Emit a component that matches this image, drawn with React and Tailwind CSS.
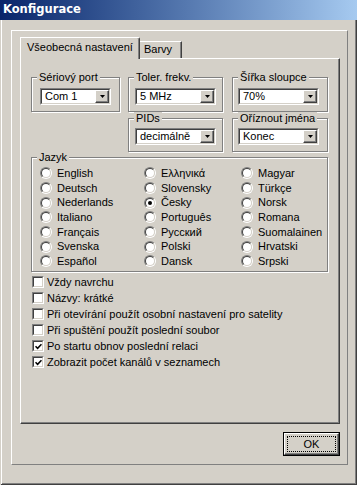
import React from 'react';

const raisedBtn = "bg-[#d4d0c8] border border-t-white border-l-white border-r-[#404040] border-b-[#404040] shadow-[inset_-1px_-1px_0_#808080]";

const DropBtn = () => (
    <div className={`w-[14px] h-full flex items-center justify-center ${raisedBtn}`}>
        <svg width="5" height="3" viewBox="0 0 5 3"><path d="M0 0h5L2.5 3z" fill="#000" /></svg>
    </div>
);

const Combo = ({ value }) => (
    <div className="h-[17px] flex border border-t-[#808080] border-l-[#808080] border-b-white border-r-white">
        <div className="flex-1 flex bg-white border border-t-[#404040] border-l-[#404040] border-b-[#d4d0c8] border-r-[#d4d0c8]">
            <span className="flex-1 pl-[3px] leading-[13px] whitespace-nowrap overflow-hidden">{value}</span>
            <DropBtn />
        </div>
    </div>
);

const Group = ({ label, className, children }) => (
    <div className={`relative border border-[#808080] shadow-[inset_1px_1px_0_#fff,1px_1px_0_#fff] ${className}`}>
        <span className="absolute -top-[7px] left-[5px] px-[2px] bg-[#d4d0c8] leading-[13px] whitespace-nowrap">{label}</span>
        {children}
    </div>
);

const Radio = ({ label, checked }) => (
    <div className="h-[14.7px] flex items-center gap-[5px] whitespace-nowrap">
        <div className="w-[12px] h-[12px] rounded-full border border-t-[#808080] border-l-[#808080] border-b-white border-r-white">
            <div className="w-full h-full rounded-full bg-white border border-t-[#404040] border-l-[#404040] border-b-[#d4d0c8] border-r-[#d4d0c8] flex items-center justify-center">
                {checked && <div className="w-[4px] h-[4px] rounded-full bg-black" />}
            </div>
        </div>
        <span className="leading-[13px]">{label}</span>
    </div>
);

const Check = ({ label, checked }) => (
    <div className="h-[16px] flex items-center gap-[3px] ml-[1px] whitespace-nowrap">
        <div className="w-[12px] h-[12px] border border-t-[#808080] border-l-[#808080] border-b-white border-r-white">
            <div className="w-full h-full bg-white border border-t-[#404040] border-l-[#404040] border-b-[#d4d0c8] border-r-[#d4d0c8] flex items-center justify-center">
                {checked && (
                    <svg width="7" height="7" viewBox="0 0 7 7">
                        <path d="M0.5 3.2 L2.6 5.3 L6.5 1.2" stroke="#000" strokeWidth="1.6" fill="none" />
                    </svg>
                )}
            </div>
        </div>
        <span className="leading-[13px]">{label}</span>
    </div>
);

const languages = [
    ['English', 'Deutsch', 'Nederlands', 'Italiano', 'Français', 'Svenska', 'Español'],
    ['Ελληνικά', 'Slovensky', 'Česky', 'Português', 'Русский', 'Polski', 'Dansk'],
    ['Magyar', 'Türkçe', 'Norsk', 'Romana', 'Suomalainen', 'Hrvatski', 'Srpski'],
];
const colWidths = ['w-[104px]', 'w-[97px]', 'flex-1'];

const options = [
    ['Vždy navrchu', false],
    ['Názvy: krátké', false],
    ['Při otevírání použít osobní nastavení pro satelity', false],
    ['Při spuštění použít poslední soubor', false],
    ['Po startu obnov poslední relaci', true],
    ['Zobrazit počet kanálů v seznamech', true],
];

export default function App() {
    return (
        <div className="w-[357px] h-[485px] bg-[#d4d0c8] flex flex-col overflow-hidden text-[11px] text-black font-['Liberation_Sans',Arial,sans-serif]">
            {/* Title bar */}
            <div className="h-[20px] shrink-0 flex items-center pl-[3px] bg-linear-to-r from-[#0a246a] to-[#a6caf0] text-white font-bold text-[11.5px] font-['DejaVu_Sans',sans-serif]">
                Konfigurace
            </div>

            {/* Window body */}
            <div className="flex-1 pt-[10px] pl-[11px] shadow-[inset_1px_0_0_#d4d0c8,inset_0_-1px_0_#404040,inset_-1px_0_0_#404040,inset_2px_0_0_#fff,inset_0_-2px_0_#808080,inset_-2px_0_0_#808080]">
                <div className="w-[337px] h-[435px] border border-t-white border-l-white border-r-[#808080] border-b-[#808080] pt-[6px] pl-[8px] pr-[7px] flex flex-col">
                    {/* Tabs */}
                    <div className="h-[21px] flex items-end relative z-10">
                        <div className="h-[22px] w-[120px] -mb-[1px] bg-[#d4d0c8] border-t border-l border-r border-t-white border-l-white border-r-[#404040] shadow-[inset_-1px_0_0_#808080] rounded-tr-[2px] pl-[6px] pt-[3px] leading-[13px] whitespace-nowrap">
                            Všeobecná nastavení
                        </div>
                        <div className="h-[17px] w-[42px] border-t border-r border-t-white border-r-[#404040] shadow-[inset_-1px_0_0_#808080] pl-[4px] pt-[1px] leading-[13px]">
                            Barvy
                        </div>
                    </div>

                    {/* Tab panel */}
                    <div className="w-[320px] h-[366px] border border-t-white border-l-white border-r-[#404040] border-b-[#404040] shadow-[inset_-1px_-1px_0_#808080] pt-[18px] pl-[10px] flex flex-col">
                        <div className="flex">
                            <Group label="Sériový port" className="w-[89px] h-[35px] pt-[10px] px-[8px]">
                                <Combo value="Com 1" />
                            </Group>
                            <Group label="Toler. frekv." className="w-[95px] h-[35px] pt-[10px] px-[6px] ml-[8px]">
                                <Combo value="5 MHz" />
                            </Group>
                            <Group label="Šířka sloupce" className="w-[96px] h-[35px] pt-[10px] pl-[5px] pr-[8px] ml-[9px]">
                                <Combo value="70%" />
                            </Group>
                        </div>
                        <div className="flex mt-[6px] ml-[97px]">
                            <Group label="PIDs" className="w-[95px] h-[34px] pt-[9px] px-[6px]">
                                <Combo value="decimálně" />
                            </Group>
                            <Group label="Oříznout jména" className="w-[96px] h-[34px] pt-[9px] pl-[5px] pr-[8px] ml-[9px]">
                                <Combo value="Konec" />
                            </Group>
                        </div>

                        <Group label="Jazyk" className="w-[297px] h-[115px] mt-[5px] pt-[8px] pl-[8px] flex">
                            {languages.map((col, i) => (
                                <div key={i} className={`flex flex-col ${colWidths[i]}`}>
                                    {col.map((l) => <Radio key={l} label={l} checked={l === 'Česky'} />)}
                                </div>
                            ))}
                        </Group>

                        <div className="mt-[2px] flex flex-col">
                            {options.map(([l, c]) => <Check key={l} label={l} checked={c} />)}
                        </div>
                    </div>

                    {/* OK */}
                    <div className="flex justify-end mt-[8px]">
                        <div className="w-[57px] h-[24px] border border-black">
                            <div className={`w-full h-full p-[2px] ${raisedBtn}`}>
                                <div className="w-full h-full border border-dotted border-black flex items-center justify-center leading-[13px]">
                                    OK
                                </div>
                            </div>
                        </div>
                    </div>
                </div>
            </div>
        </div>
    );
}
